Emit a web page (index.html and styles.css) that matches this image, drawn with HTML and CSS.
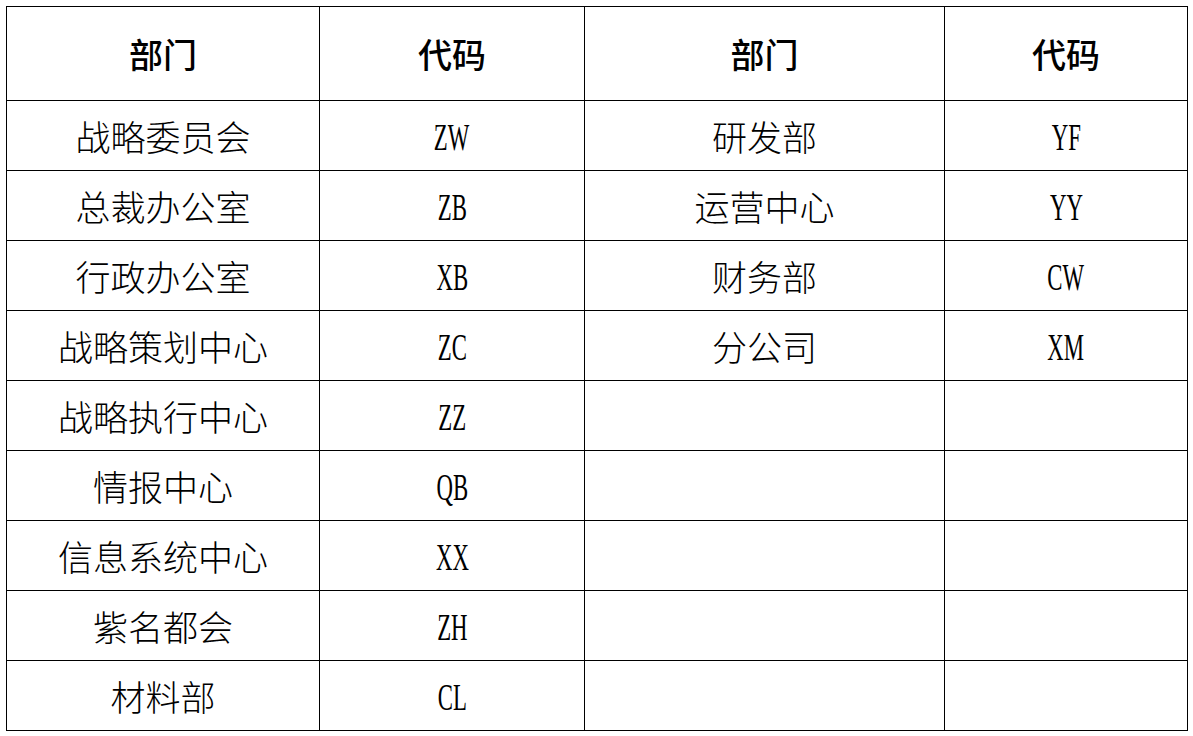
FILE: index.html
```html
<!DOCTYPE html>
<html lang="zh-CN">
<head>
<meta charset="utf-8">
<title>部门代码</title>
<link rel="stylesheet" href="styles.css">
</head>
<body>
<table class="codes">
  <colgroup>
    <col class="c-dept1">
    <col class="c-code1">
    <col class="c-dept2">
    <col class="c-code2">
  </colgroup>
  <thead>
    <tr class="head-row">
      <th>部门</th><th>代码</th><th>部门</th><th>代码</th>
    </tr>
  </thead>
  <tbody>
    <tr><td>战略委员会</td><td><span class="code">ZW</span></td><td>研发部</td><td><span class="code">YF</span></td></tr>
    <tr><td>总裁办公室</td><td><span class="code">ZB</span></td><td>运营中心</td><td><span class="code">YY</span></td></tr>
    <tr><td>行政办公室</td><td><span class="code">XB</span></td><td>财务部</td><td><span class="code">CW</span></td></tr>
    <tr><td>战略策划中心</td><td><span class="code">ZC</span></td><td>分公司</td><td><span class="code">XM</span></td></tr>
    <tr><td>战略执行中心</td><td><span class="code">ZZ</span></td><td></td><td></td></tr>
    <tr><td>情报中心</td><td><span class="code">QB</span></td><td></td><td></td></tr>
    <tr><td>信息系统中心</td><td><span class="code">XX</span></td><td></td><td></td></tr>
    <tr><td>紫名都会</td><td><span class="code">ZH</span></td><td></td><td></td></tr>
    <tr><td>材料部</td><td><span class="code">CL</span></td><td></td><td></td></tr>
  </tbody>
</table>
</body>
</html>
```
FILE: styles.css
```css
html, body {
  margin: 0;
  padding: 0;
  background: #fff;
}

body {
  padding: 6px 0 0 6px;
  font-family: "Noto Sans CJK SC", "Liberation Serif", serif;
  color: #000;
}

.codes {
  border-collapse: collapse;
  table-layout: fixed;
  width: 1181px;
}

.c-dept1 { width: 313px; }
.c-code1 { width: 265px; }
.c-dept2 { width: 360px; }
.c-code2 { width: 243px; }

.codes th,
.codes td {
  border: 1px solid #000;
  padding: 0;
  text-align: center;
  vertical-align: middle;
  line-height: 1;
}

.codes th {
  height: 93px;
  font-size: 34px;
  font-weight: 500;
}

.codes td {
  height: 69px;
  font-size: 35px;
  font-weight: 300;
}

.code {
  display: inline-block;
  font-family: "Liberation Serif", serif;
  font-size: 38px;
  font-weight: 400;
  transform: scaleX(0.6);
  transform-origin: center;
  position: relative;
  top: 1px;
}
```
